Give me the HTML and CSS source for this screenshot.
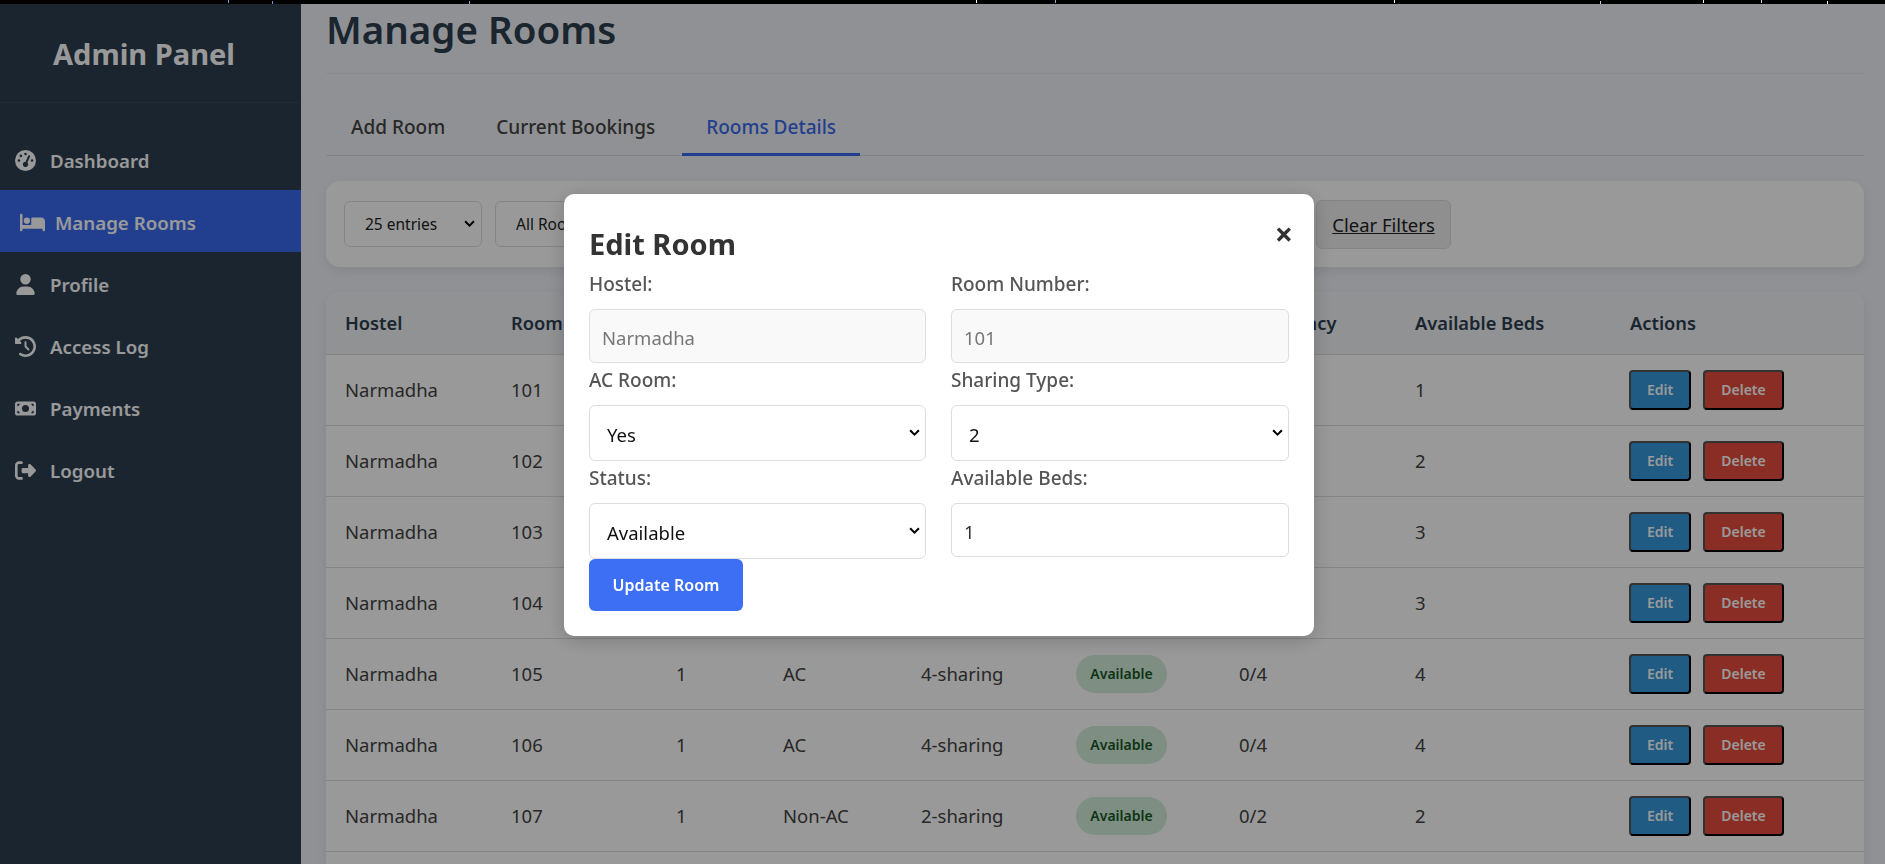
FILE: index.html
```html
<!DOCTYPE html>
<html>
  <head>
    <title>Manage Rooms</title>
    <link rel="stylesheet" href="styles.css">
  </head>
  <body>
    <div class="top-strip"></div>
    <div class="layout">
      <aside class="sidebar">
        <h2 class="brand">Admin Panel</h2>
        <nav class="nav">
          <a class="nav-item" href="#">
            <svg class="nav-icon" viewBox="0 0 512 512"><path d="M0 256a256 256 0 1 1 512 0A256 256 0 1 1 0 256zM288 96a32 32 0 1 0 -64 0 32 32 0 1 0 64 0zM256 416c35.3 0 64-28.7 64-64c0-17.4-6.9-33.1-18.1-44.6L366 161.7c5.3-12.1-.2-26.3-12.3-31.6s-26.3 .2-31.6 12.3L257.9 288c-.6 0-1.3 0-1.9 0c-35.3 0-64 28.7-64 64s28.7 64 64 64zM176 144a32 32 0 1 0 -64 0 32 32 0 1 0 64 0zM96 288a32 32 0 1 0 0-64 32 32 0 1 0 0 64zm352-32a32 32 0 1 0 -64 0 32 32 0 1 0 64 0z"/></svg>
            Dashboard
          </a>
          <a class="nav-item active" href="#">
            <svg class="nav-icon" viewBox="0 0 640 512"><path d="M32 32c17.7 0 32 14.3 32 32V320H288V160c0-17.7 14.3-32 32-32H544c53 0 96 43 96 96V448c0 17.7-14.3 32-32 32s-32-14.3-32-32V416H352 320 64v32c0 17.7-14.3 32-32 32s-32-14.3-32-32V64C0 46.3 14.3 32 32 32zm144 96a80 80 0 1 1 0 160 80 80 0 1 1 0-160z"/></svg>
            Manage Rooms
          </a>
          <a class="nav-item" href="#">
            <svg class="nav-icon" viewBox="0 0 448 512"><path d="M224 256A128 128 0 1 0 224 0a128 128 0 1 0 0 256zm-45.7 48C79.8 304 0 383.8 0 482.3C0 498.7 13.3 512 29.7 512H418.3c16.4 0 29.7-13.3 29.7-29.7C448 383.8 368.2 304 269.7 304H178.3z"/></svg>
            Profile
          </a>
          <a class="nav-item" href="#">
            <svg class="nav-icon" viewBox="0 0 512 512"><path d="M75 75L41 41C25.9 25.9 0 36.6 0 57.9V168c0 13.3 10.7 24 24 24H134.1c21.4 0 32.1-25.9 17-41l-30.8-30.8C155 85.5 203 64 256 64c106 0 192 86 192 192s-86 192-192 192c-40.8 0-78.6-12.7-109.7-34.4c-14.5-10.1-34.4-6.6-44.6 7.9s-6.6 34.4 7.9 44.6C151.2 495 201.7 512 256 512c141.4 0 256-114.6 256-256S397.4 0 256 0C185.3 0 121.3 28.7 75 75zm181 53c-13.3 0-24 10.7-24 24V256c0 6.4 2.5 12.5 7 17l72 72c9.4 9.4 24.6 9.4 33.9 0s9.4-24.6 0-33.9l-65-65V152c0-13.3-10.7-24-24-24z"/></svg>
            Access Log
          </a>
          <a class="nav-item" href="#">
            <svg class="nav-icon" viewBox="0 0 576 512"><path d="M64 64C28.7 64 0 92.7 0 128V384c0 35.3 28.7 64 64 64H512c35.3 0 64-28.7 64-64V128c0-35.3-28.7-64-64-64H64zm64 320H64V320c35.3 0 64 28.7 64 64zM64 192V128h64c0 35.3-28.7 64-64 64zM448 384c0-35.3 28.7-64 64-64v64H448zm64-192c-35.3 0-64-28.7-64-64h64v64zM288 160a96 96 0 1 1 0 192 96 96 0 1 1 0-192z"/></svg>
            Payments
          </a>
          <a class="nav-item" href="#">
            <svg class="nav-icon" viewBox="0 0 512 512"><path d="M377.9 105.9L500.7 228.7c7.2 7.2 11.3 17.1 11.3 27.3s-4.1 20.1-11.3 27.3L377.9 406.1c-6.4 6.4-15 9.9-24 9.9c-18.7 0-33.9-15.2-33.9-33.9l0-62.1-128 0c-17.7 0-32-14.3-32-32l0-64c0-17.7 14.3-32 32-32l128 0 0-62.1c0-18.7 15.2-33.9 33.9-33.9c9 0 17.6 3.6 24 9.9zM160 96L96 96c-17.7 0-32 14.3-32 32l0 256c0 17.7 14.3 32 32 32l64 0c17.7 0 32 14.3 32 32s-14.3 32-32 32l-64 0c-53 0-96-43-96-96L0 128C0 75 43 32 96 32l64 0c17.7 0 32 14.3 32 32s-14.3 32-32 32z"/></svg>
            Logout
          </a>
        </nav>
      </aside>

      <main class="main">
        <h1 class="page-title">Manage Rooms</h1>

        <div class="tabs">
          <a class="tab" href="#">Add Room</a>
          <a class="tab" href="#">Current Bookings</a>
          <a class="tab active" href="#">Rooms Details</a>
        </div>

        <div class="card filters">
          <select class="filter-select entries"><option>25 entries</option></select>
          <select class="filter-select"><option>All Rooms</option></select>
          <select class="filter-select"><option>All Status</option></select>
          <select class="filter-select"><option>All Types</option></select>
          <input class="filter-search" type="text" placeholder="Search rooms">
          <button class="clear-btn">Clear Filters</button>
        </div>

        <div class="card table-card">
          <table class="rooms-table">
            <thead>
              <tr>
                <th>Hostel</th>
                <th>Room No</th>
                <th>Floor</th>
                <th>Type</th>
                <th>Sharing</th>
                <th>Status</th>
                <th>Occupancy</th>
                <th>Available Beds</th>
                <th>Actions</th>
              </tr>
            </thead>
            <tbody>
              <tr>
                <td>Narmadha</td><td>101</td><td>1</td><td>AC</td><td>2-sharing</td>
                <td><span class="badge">Available</span></td><td>1/2</td><td>1</td>
                <td><button class="btn-edit">Edit</button><button class="btn-delete">Delete</button></td>
              </tr>
              <tr>
                <td>Narmadha</td><td>102</td><td>1</td><td>AC</td><td>2-sharing</td>
                <td><span class="badge">Available</span></td><td>0/2</td><td>2</td>
                <td><button class="btn-edit">Edit</button><button class="btn-delete">Delete</button></td>
              </tr>
              <tr>
                <td>Narmadha</td><td>103</td><td>1</td><td>AC</td><td>3-sharing</td>
                <td><span class="badge">Available</span></td><td>0/3</td><td>3</td>
                <td><button class="btn-edit">Edit</button><button class="btn-delete">Delete</button></td>
              </tr>
              <tr>
                <td>Narmadha</td><td>104</td><td>1</td><td>AC</td><td>3-sharing</td>
                <td><span class="badge">Available</span></td><td>0/3</td><td>3</td>
                <td><button class="btn-edit">Edit</button><button class="btn-delete">Delete</button></td>
              </tr>
              <tr>
                <td>Narmadha</td><td>105</td><td>1</td><td>AC</td><td>4-sharing</td>
                <td><span class="badge">Available</span></td><td>0/4</td><td>4</td>
                <td><button class="btn-edit">Edit</button><button class="btn-delete">Delete</button></td>
              </tr>
              <tr>
                <td>Narmadha</td><td>106</td><td>1</td><td>AC</td><td>4-sharing</td>
                <td><span class="badge">Available</span></td><td>0/4</td><td>4</td>
                <td><button class="btn-edit">Edit</button><button class="btn-delete">Delete</button></td>
              </tr>
              <tr>
                <td>Narmadha</td><td>107</td><td>1</td><td>Non-AC</td><td>2-sharing</td>
                <td><span class="badge">Available</span></td><td>0/2</td><td>2</td>
                <td><button class="btn-edit">Edit</button><button class="btn-delete">Delete</button></td>
              </tr>
              <tr>
                <td colspan="9"></td>
              </tr>
            </tbody>
          </table>
        </div>
      </main>
    </div>

    <div class="overlay">
      <div class="modal">
        <span class="modal-close">&times;</span>
        <h2 class="modal-title">Edit Room</h2>
        <form class="modal-form">
          <div>
            <label>Hostel:</label>
            <input class="field readonly" type="text" value="Narmadha" readonly>
          </div>
          <div>
            <label>Room Number:</label>
            <input class="field readonly" type="text" value="101" readonly>
          </div>
          <div>
            <label>AC Room:</label>
            <select class="field field-select"><option>Yes</option><option>No</option></select>
          </div>
          <div>
            <label>Sharing Type:</label>
            <select class="field field-select"><option>2</option><option>3</option><option>4</option></select>
          </div>
          <div>
            <label>Status:</label>
            <select class="field field-select"><option>Available</option><option>Occupied</option></select>
          </div>
          <div>
            <label>Available Beds:</label>
            <input class="field" type="text" value="1">
          </div>
        </form>
        <button class="update-btn">Update Room</button>
      </div>
    </div>
  </body>
</html>
```

FILE: styles.css
```css
* {
  box-sizing: border-box;
}

body {
  margin: 0;
  height: 864px;
  overflow: hidden;
  font-family: "Noto Sans", sans-serif;
  font-size: 18.5px;
  color: #444444;
  background-color: #f0f2f7;
}

a {
  text-decoration: none;
}

.top-strip {
  height: 4px;
  background-color: #000000;
  background-image:
    linear-gradient(#7f9fe0, #7f9fe0), linear-gradient(#6f8fd0, #6f8fd0),
    linear-gradient(#7f9fe0, #7f9fe0), linear-gradient(#ffffff, #ffffff),
    linear-gradient(#9fa8c0, #9fa8c0), linear-gradient(#ffffff, #ffffff),
    linear-gradient(#c0c8d8, #c0c8d8), linear-gradient(#ffffff, #ffffff),
    linear-gradient(#c0d0f0, #c0d0f0), linear-gradient(#ffffff, #ffffff);
  background-size: 1px 3px;
  background-repeat: no-repeat;
  background-position: 228px 0, 272px 1px, 469px 1px, 976px 0, 1055px 0,
    1394px 0, 1600px 1px, 1703px 0, 1761px 0, 1827px 1px;
}

.layout {
  display: flex;
  height: 860px;
}

/* sidebar */
.sidebar {
  flex: 0 0 301px;
  background-color: #2c3e50;
  color: #ffffff;
}

.brand {
  margin: 0;
  height: 99px;
  padding-right: 13px;
  display: flex;
  align-items: center;
  justify-content: center;
  font-size: 29px;
  font-weight: 700;
  border-bottom: 1px solid #34495e;
}

.nav {
  padding-top: 25px;
}

.nav-item {
  height: 62px;
  padding: 2px 0 0 15px;
  display: flex;
  align-items: center;
  gap: 14px;
  color: #ffffff;
  font-size: 18.7px;
  font-weight: 600;
}

.nav-icon {
  width: 21px;
  height: 21px;
  fill: currentColor;
}

.nav-item.active {
  padding-left: 20px;
  background-color: #3a6aee;
  gap: 10px;
}

.nav-item.active .nav-icon {
  width: 25px;
}

/* main content */
.main {
  flex: 1;
  padding: 0 21px 0 25px;
  overflow: hidden;
}

.page-title {
  margin: 0;
  height: 70px;
  font-size: 38.5px;
  font-weight: 600;
  line-height: 50px;
  color: #2c3e50;
  border-bottom: 1px solid #e4e6ea;
}

.tabs {
  display: flex;
  gap: 3px;
  height: 82px;
  padding: 29px 0 0 1px;
  border-bottom: 1px solid #d8dade;
}

.tab {
  padding: 11px 24px 0;
  height: 53px;
  font-size: 19px;
  font-weight: 500;
  color: #444444;
}

.tab.active {
  color: #3a6aee;
  border-bottom: 3px solid #3a6aee;
}

.card {
  background-color: #ffffff;
  border-radius: 14px;
  box-shadow: 0 4px 12px rgba(0, 0, 0, 0.08);
}

.filters {
  margin-top: 25px;
  height: 86px;
  padding: 0 18px;
  display: flex;
  align-items: center;
  gap: 13px;
}

.filter-select {
  width: 150px;
  height: 46px;
  padding: 0 14px 0 20px;
  font: inherit;
  font-size: 15.5px;
  color: #222222;
  background: #ffffff url("data:image/svg+xml,%3Csvg xmlns='http://www.w3.org/2000/svg' viewBox='0 0 10 7'%3E%3Cpath d='M1 1l4 4 4-4' fill='none' stroke='%23000' stroke-width='1.8'/%3E%3C/svg%3E") no-repeat right 6px center / 11px 8px;
  appearance: none;
  border: 1px solid #dddddd;
  border-radius: 6px;
}

.filter-select.entries {
  width: 138px;
}

.filter-search {
  width: 319px;
  height: 46px;
  padding: 0 14px;
  font: inherit;
  border: 1px solid #dddddd;
  border-radius: 6px;
}

.clear-btn {
  width: 135px;
  height: 49px;
  padding: 0;
  font: inherit;
  color: #222222;
  text-decoration: underline;
  background-color: #eeeeee;
  border: 1px solid #dddddd;
  border-radius: 6px;
}

.table-card {
  margin-top: 25px;
  overflow: hidden;
}

.rooms-table {
  width: 100%;
  table-layout: fixed;
  border-collapse: collapse;
}

.rooms-table th {
  height: 62px;
  padding: 0 19px;
  text-align: left;
  font-weight: 600;
  font-size: 18.3px;
  color: #2c3e50;
  background-color: #f1f3f7;
  border-bottom: 1px solid #dddddd;
}

.rooms-table td {
  height: 71px;
  padding: 0 19px;
  border-bottom: 1px solid #dddddd;
}

.rooms-table th:nth-child(1) { width: 166px; }
.rooms-table th:nth-child(2) { width: 165px; }
.rooms-table th:nth-child(3) { width: 107px; }
.rooms-table th:nth-child(4) { width: 138px; }
.rooms-table th:nth-child(5) { width: 155px; }
.rooms-table th:nth-child(6) { width: 163px; }
.rooms-table th:nth-child(7) { width: 176px; }
.rooms-table th:nth-child(8) { width: 215px; }

.badge {
  display: inline-block;
  width: 91px;
  height: 38px;
  line-height: 38px;
  text-align: center;
  font-size: 14px;
  font-weight: 600;
  color: #155724;
  background-color: #d4edda;
  border-radius: 19px;
}

.btn-edit,
.btn-delete {
  height: 40px;
  padding: 0;
  font-family: inherit;
  font-size: 14px;
  font-weight: 600;
  color: #ffffff;
  border: 2px outset #000000;
  border-radius: 4px;
}

.btn-edit {
  width: 62px;
  margin: 0 12px 0 -1px;
  background-color: #3498db;
}

.btn-delete {
  width: 81px;
  background-color: #e74c3c;
}

/* edit modal */
.overlay {
  position: fixed;
  top: 4px;
  left: 0;
  right: 0;
  bottom: 0;
  padding: 190px 7px 0 0;
  display: flex;
  justify-content: center;
  align-items: flex-start;
  background-color: rgba(0, 0, 0, 0.4);
}

.modal {
  position: relative;
  width: 750px;
  padding: 25px;
  background-color: #ffffff;
  border-radius: 10px;
  box-shadow: 0 4px 20px rgba(0, 0, 0, 0.2);
}

.modal-close {
  position: absolute;
  top: 19px;
  right: 21px;
  font-size: 32px;
  font-weight: 700;
  line-height: 42px;
  color: #333333;
}

.modal-title {
  margin: 0;
  height: 48px;
  font-size: 29px;
  font-weight: 700;
  line-height: 50px;
  color: #333333;
}

.modal-form {
  display: grid;
  grid-template-columns: 337px 338px;
  column-gap: 25px;
  align-items: start;
}

.modal-form label {
  display: block;
  margin: 3px 0 11px;
  font-size: 19px;
  line-height: 28px;
  color: #555555;
  font-weight: 500;
}

.field {
  display: block;
  width: 100%;
  height: 54px;
  padding: 2px 12px 0;
  font: inherit;
  color: #333333;
  background-color: #ffffff;
  border: 1px solid #dddddd;
  border-radius: 6px;
}

.field.readonly {
  color: #777777;
  background-color: #f9f9f9;
}

.field-select {
  height: 56px;
  padding: 3px 12px 0 17px;
  color: #111111;
  background: #ffffff url("data:image/svg+xml,%3Csvg xmlns='http://www.w3.org/2000/svg' viewBox='0 0 10 7'%3E%3Cpath d='M1 1l4 4 4-4' fill='none' stroke='%23000' stroke-width='1.8'/%3E%3C/svg%3E") no-repeat right 5px center / 11px 8px;
  appearance: none;
}

.update-btn {
  display: block;
  width: 154px;
  height: 52px;
  padding: 0;
  font: inherit;
  font-size: 16px;
  font-weight: 600;
  color: #ffffff;
  background-color: #3d6ff5;
  border: none;
  border-radius: 6px;
}
```
